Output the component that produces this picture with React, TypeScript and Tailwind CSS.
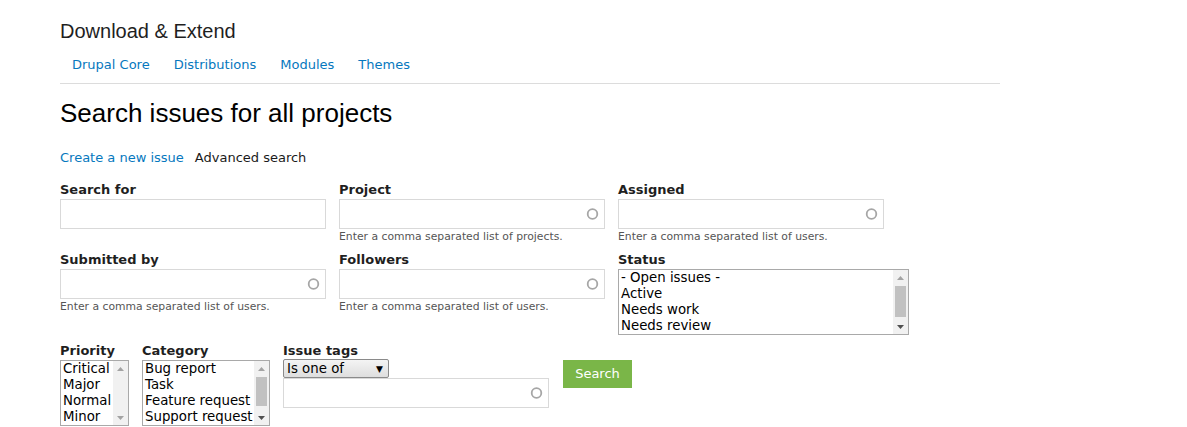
import React from "react";

const body = { fontFamily: '"DejaVu Sans", sans-serif' };
const head = { fontFamily: '"Liberation Sans", Arial, sans-serif' };

function Ring() {
  return (
    <svg width="13" height="13" viewBox="0 0 13 13" className="absolute right-[5px] top-1/2 -translate-y-1/2">
      <circle cx="6.5" cy="6.5" r="4.8" fill="none" stroke="#a6a6a6" strokeWidth="1.8" />
    </svg>
  );
}

function TextInput({ width = "w-[266px]", ring = true }: { width?: string; ring?: boolean }) {
  return (
    <div className={`relative h-[30px] ${width} border border-[#d9d9d9] bg-white`}>
      {ring && <Ring />}
    </div>
  );
}

function Arrow({ up, dark }: { up?: boolean; dark?: boolean }) {
  return (
    <svg width="7" height="4" viewBox="0 0 7 4">
      <path d={up ? "M0 4 L3.5 0 L7 4 Z" : "M0 0 L3.5 4 L7 0 Z"} fill={dark ? "#505050" : "#a3a3a3"} />
    </svg>
  );
}

function ListBox({
  items,
  width,
  thumb,
}: {
  items: string[];
  width: string;
  thumb?: { top: string; h: string };
}) {
  return (
    <div className={`flex h-[66px] ${width} border border-[#a9a9a9] bg-white`}>
      <div className="flex-1 pl-[2px] text-[13.33px] leading-[16px] text-black">
        {items.map((it) => (
          <div key={it} className="whitespace-nowrap">
            {it}
          </div>
        ))}
      </div>
      <div className="relative w-[15px] bg-[#f1f1f1]">
        <div className="flex h-[15px] items-center justify-center">
          <Arrow up />
        </div>
        {thumb && <div className={`absolute left-[2px] right-[2px] ${thumb.top} ${thumb.h} bg-[#c1c1c1]`} />}
        <div className="absolute bottom-0 flex h-[15px] w-full items-center justify-center">
          <Arrow dark={!!thumb} />
        </div>
      </div>
    </div>
  );
}

function Label({ children }: { children: React.ReactNode }) {
  return <div className="text-[13px] font-bold leading-[18px] text-[#1f1f1f]">{children}</div>;
}

function Help({ children }: { children: React.ReactNode }) {
  return <div className="mt-[1px] text-[10.8px] leading-[14px] text-[#555]">{children}</div>;
}

export default function App() {
  return (
    <div className="min-h-[427px] bg-white" style={body}>
      <div className="w-[1000px] pl-[60px] pt-[19px]">
        <h2 className="text-[20px] leading-[24px] text-[#1f1f1f]" style={head}>
          Download &amp; Extend
        </h2>
        <nav className="mt-[13px] flex border-b border-[#dcdcdc] pb-[9px] text-[13px] leading-[18px] text-[#0678be]">
          <a className="px-3">Drupal Core</a>
          <a className="px-3">Distributions</a>
          <a className="px-3">Modules</a>
          <a className="px-3">Themes</a>
        </nav>

        <h1 className="mt-[13px] text-[26px] leading-[32px] text-black" style={head}>
          Search issues for all projects
        </h1>

        <div className="mt-[20px] flex gap-[11px] text-[13px] leading-[18px]">
          <a className="text-[#0678be]">Create a new issue</a>
          <span className="text-[#1a1a1a]">Advanced search</span>
        </div>

        <div className="mt-[14px] grid grid-cols-[266px_266px_266px] gap-x-[13px]">
          <div>
            <Label>Search for</Label>
            <TextInput ring={false} />
          </div>
          <div>
            <Label>Project</Label>
            <TextInput />
            <Help>Enter a comma separated list of projects.</Help>
          </div>
          <div>
            <Label>Assigned</Label>
            <TextInput />
            <Help>Enter a comma separated list of users.</Help>
          </div>

          <div className="mt-[7px]">
            <Label>Submitted by</Label>
            <TextInput />
            <Help>Enter a comma separated list of users.</Help>
          </div>
          <div className="mt-[7px]">
            <Label>Followers</Label>
            <TextInput />
            <Help>Enter a comma separated list of users.</Help>
          </div>
          <div className="mt-[7px]">
            <Label>Status</Label>
            <ListBox
              width="w-[291px]"
              items={["- Open issues -", "Active", "Needs work", "Needs review"]}
              thumb={{ top: "top-[16px]", h: "h-[31px]" }}
            />
          </div>
        </div>

        <div className="mt-[7px] flex">
          <div>
            <Label>Priority</Label>
            <ListBox width="w-[69px]" items={["Critical", "Major", "Normal", "Minor"]} />
          </div>
          <div className="ml-[13px]">
            <Label>Category</Label>
            <ListBox
              width="w-[128px]"
              items={["Bug report", "Task", "Feature request", "Support request"]}
              thumb={{ top: "top-[16px]", h: "h-[29px]" }}
            />
          </div>
          <div className="ml-[13px]">
            <Label>Issue tags</Label>
            <div className="-mt-[1px] flex h-[19px] w-[106px] items-center justify-between rounded-[2px] border border-[#8a8a8a] bg-gradient-to-b from-[#f4f4f4] to-[#dedede] pl-[3px] pr-[5px] text-[13.33px] leading-[16px] text-black">
              <span>Is one of</span>
              <span className="text-[9px]">▼</span>
            </div>
            <TextInput />
          </div>
          <div className="ml-[14px] pt-[18px]">
            <button className="h-[28px] w-[69px] bg-[#7ab648] text-[13px] text-white">Search</button>
          </div>
        </div>
      </div>
    </div>
  );
}
